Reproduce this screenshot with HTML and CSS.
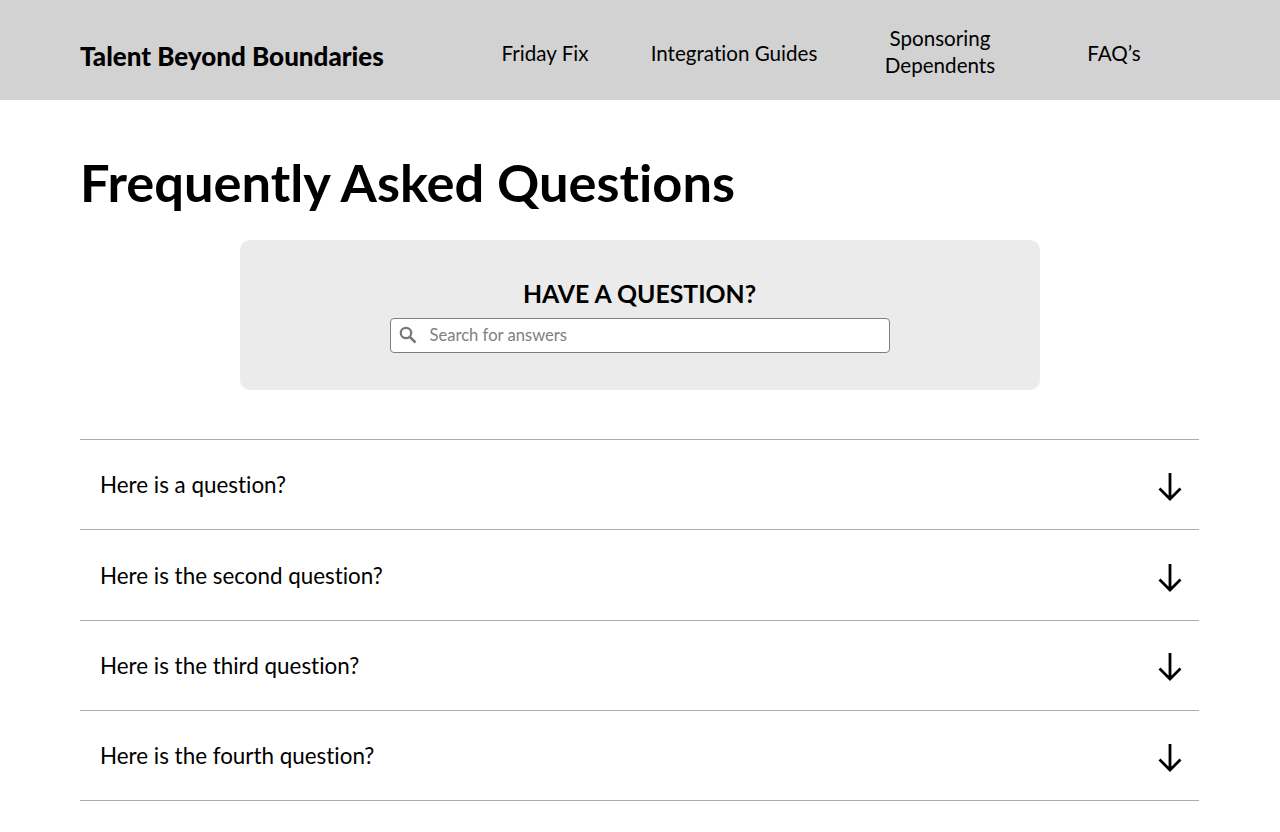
FILE: index.html
```html
<!DOCTYPE html>
<html lang="en">
<head>
    <meta charset="UTF-8">
    <title>Frequently Asked Questions</title>
    <link rel="stylesheet" href="styles.css">
</head>
<body>
    <header class="topbar">
        <div class="logo">Talent Beyond Boundaries</div>
        <nav class="nav">
            <a class="nav-item nav-fix">Friday Fix</a>
            <a class="nav-item nav-guides">Integration Guides</a>
            <a class="nav-item nav-sponsor">Sponsoring Dependents</a>
            <a class="nav-item nav-faq">FAQ’s</a>
        </nav>
    </header>

    <main class="content">
        <h1>Frequently Asked Questions</h1>

        <section class="search-card">
            <h2>HAVE A QUESTION?</h2>
            <div class="search-box">
                <svg class="search-icon" width="18" height="18" viewBox="0 0 18 18">
                    <circle cx="7" cy="7" r="5.2" fill="none" stroke="#777" stroke-width="2.2"/>
                    <path d="M10.8 10.8L16.5 16.5" fill="none" stroke="#777" stroke-width="2.6"/>
                </svg>
                <span class="placeholder">Search for answers</span>
            </div>
        </section>

        <div class="faq-list">
            <div class="faq-row">
                <span>Here is a question?</span>
                <svg class="arrow" width="26" height="30" viewBox="0 0 26 30"><path d="M13 1V27M2.5 16.500L13 27L23.500 16.500" fill="none" stroke="#000" stroke-width="2.8"/></svg>
            </div>
            <div class="faq-row">
                <span>Here is the second question?</span>
                <svg class="arrow" width="26" height="30" viewBox="0 0 26 30"><path d="M13 1V27M2.5 16.500L13 27L23.500 16.500" fill="none" stroke="#000" stroke-width="2.8"/></svg>
            </div>
            <div class="faq-row">
                <span>Here is the third question?</span>
                <svg class="arrow" width="26" height="30" viewBox="0 0 26 30"><path d="M13 1V27M2.5 16.500L13 27L23.500 16.500" fill="none" stroke="#000" stroke-width="2.8"/></svg>
            </div>
            <div class="faq-row">
                <span>Here is the fourth question?</span>
                <svg class="arrow" width="26" height="30" viewBox="0 0 26 30"><path d="M13 1V27M2.5 16.500L13 27L23.500 16.500" fill="none" stroke="#000" stroke-width="2.8"/></svg>
            </div>
        </div>
    </main>
</body>
</html>
```

FILE: styles.css
```css
body {
    margin: 0;
    font-family: "Lato", "Open Sans", sans-serif;
    font-variant-ligatures: none;
    color: #000;
    background-color: #fff;
}
.topbar {
    display: flex;
    align-items: center;
    height: 100px;
    padding-left: 80px;
    background-color: #d2d2d2;
}
.logo {
    width: 380px;
    margin-top: 12px;
    font-size: 26px;
    font-weight: 900;
    white-space: nowrap;
}
.nav {
    display: flex;
    align-items: center;
    margin-top: 3px;
    font-size: 20.6px;
    line-height: 27px;
}
.nav-item {
    text-align: center;
}
.nav-fix {
    width: 170px;
    padding-top: 4px;
}
.nav-guides {
    width: 208px;
    padding-top: 4px;
}
.nav-sponsor {
    width: 204px;
}
.nav-faq {
    width: 144px;
    padding-top: 4px;
}
.content {
    padding: 0 81px 0 80px;
}
h1 {
    margin: 0;
    padding-top: 51px;
    height: 89px;
    font-size: 52.4px;
    line-height: 62px;
    font-weight: 700;
    white-space: nowrap;
}
.search-card {
    display: flex;
    flex-direction: column;
    align-items: center;
    box-sizing: border-box;
    width: 800px;
    height: 150px;
    margin: 0 auto 49px;
    padding-top: 38px;
    border-radius: 10px;
    background-color: #ebebeb;
}
h2 {
    margin: 0 0 8px;
    font-size: 24.8px;
    line-height: 32px;
    font-weight: 700;
}
.search-box {
    display: flex;
    align-items: center;
    gap: 13px;
    box-sizing: border-box;
    width: 500px;
    height: 35px;
    padding: 0 0 2px 8px;
    border: 1px solid #7f7f7f;
    border-radius: 4px;
    background-color: #fff;
}
.placeholder {
    font-size: 16.6px;
    color: #808080;
}
.faq-list {
    border-top: 1px solid #adadad;
}
.faq-row {
    display: flex;
    justify-content: space-between;
    align-items: center;
    box-sizing: border-box;
    height: 90.3px;
    padding: 0 16px 0 20px;
    border-bottom: 1px solid #adadad;
    font-size: 22.4px;
}
.arrow {
    margin-top: 4px;
}
.faq-row:nth-child(2) span {
    margin-top: 2px;
}
.faq-row:nth-child(2) .arrow {
    margin-top: 7px;
}
```
